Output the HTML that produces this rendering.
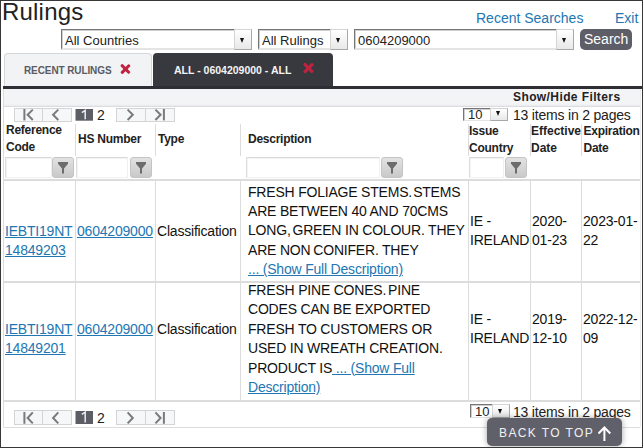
<!DOCTYPE html>
<html><head><meta charset="utf-8">
<style>
*{box-sizing:border-box}
html,body{margin:0;padding:0}
body{width:643px;height:448px;position:relative;overflow:hidden;background:#fff;font-family:"Liberation Sans",sans-serif;color:#222}
.a{position:absolute}
svg{position:absolute;overflow:visible}
.frame{position:absolute;left:0;top:0;width:643px;height:448px;border:1px solid #383838;z-index:50;pointer-events:none}
.title{left:2px;top:-2px;font-size:24px;letter-spacing:0.2px;color:#222;white-space:nowrap}
.lnk{color:#2277b3;font-size:14px;white-space:nowrap}
.sel{border-top:1px solid #767676;border-left:1px solid #767676;border-right:1px solid #e4e4e4;border-bottom:2px solid #e4e4e4;background:#fff;height:21px;box-shadow:inset 1px 1px 0 #cfcfcf}
.sel .t{position:absolute;left:3px;top:3px;font-size:13px;color:#222;white-space:nowrap}
.sel .b{position:absolute;right:-1px;top:-1px;bottom:-2px;width:18px;background:linear-gradient(#fff,#e8e8e8);border:1px solid #d4d4d4;border-right-color:#a8a8a8;border-bottom-color:#a8a8a8}
.tri{position:absolute;left:5px;top:8px;width:0;height:0;border-left:2.6px solid transparent;border-right:2.6px solid transparent;border-top:5px solid #111}
.btn{background:#5e5e68;color:#fff;border-radius:5px;font-size:14px}
.tab{border-radius:4px 4px 0 0;font-size:11px;font-weight:bold;white-space:nowrap}
.x{position:absolute;width:11px;height:11px}
.x:before,.x:after{content:"";position:absolute;left:4px;top:-0.6px;width:2.8px;height:12.2px;background:#be2340;border-radius:1px}
.x:before{transform:rotate(45deg)}
.x:after{transform:rotate(-45deg)}
.hd{font-size:12px;font-weight:bold;color:#222;line-height:16.6px;white-space:nowrap;letter-spacing:-0.25px}
.vl{width:1px;background:#dcdcdc}
.hl{height:2px;background:#dcdcdc}
.inp{border:1px solid #f0f0f0;border-top-color:#d9d9d9;border-left-color:#dedede;background:#fff;height:21px;box-shadow:inset 1px 1px 1px rgba(0,0,0,.05)}
.fb{border-radius:3px;background:linear-gradient(#e2e2e2,#c9c9c9);border:1px solid #c4c4c4;height:21px;width:22px}
.fb svg{left:0;top:0}
.cell{font-size:14px;line-height:19.1px;color:#111;white-space:nowrap;letter-spacing:-0.2px}
.u{color:#2277b3;text-decoration:underline}
.num{font-size:14px;color:#222;white-space:nowrap;letter-spacing:-0.1px}
</style></head><body>
<div class="frame"></div>

<div class="a title">Rulings</div>
<div class="a lnk" style="left:476px;top:10px">Recent Searches</div>
<div class="a lnk" style="left:615px;top:10px">Exit</div>

<!-- selects -->
<div class="a sel" style="left:61px;top:29px;width:191px"><span class="t">All Countries</span><div class="b"><div class="tri"></div></div></div>
<div class="a sel" style="left:258px;top:29px;width:90px"><span class="t">All Rulings</span><div class="b"><div class="tri"></div></div></div>
<div class="a sel" style="left:354px;top:29px;width:220px"><span class="t">0604209000</span><div class="b"><div class="tri"></div></div></div>
<div class="a btn" style="left:580px;top:29px;width:52px;height:21px"><span class="a" style="left:4px;top:2px">Search</span></div>

<!-- tabs -->
<div class="a tab" style="left:4px;top:53px;width:148px;height:34px;background:#f2f3f5;border:1px solid #d6d7da;border-bottom:none;color:#5a5b63">
  <span class="a" style="left:19px;top:11px;font-size:10px;letter-spacing:-0.1px">RECENT RULINGS</span>
  <div class="x" style="left:115px;top:9.5px"></div>
</div>
<div class="a tab" style="left:153px;top:53px;width:180px;height:34px;background:#38393e;color:#f4f4f4">
  <span class="a" style="left:21px;top:11px;font-size:10.5px">ALL - 0604209000 - ALL</span>
  <div class="x" style="left:149.5px;top:10px;transform:scale(1.05)"></div>
</div>
<div class="a" style="left:3px;top:86px;width:639px;height:3px;background:#2e2f34"></div>

<!-- grid container -->
<div class="a" style="left:3px;top:89px;width:638px;height:339px;border:1px solid #dcdcdc;border-right-color:#ececec;border-top:none;border-radius:0 0 2px 2px"></div>
<div class="a" style="left:4px;top:89px;width:636px;height:18px;background:linear-gradient(#f3f4f6 0,#f3f4f6 15px,#e9eaed 17px);border-bottom:1px solid #dcdce0"></div>
<div class="a hd" style="left:513px;top:89px;font-size:12px;letter-spacing:0.4px">Show/Hide Filters</div>

<!-- top pager -->
<svg width="643" height="448" viewBox="0 0 643 448" style="left:0;top:0">
  <g fill="#f6f7f9" stroke="#d4d4d6" stroke-width="1">
    <rect x="14.5" y="108.5" width="28" height="13"/>
    <rect x="42.5" y="108.5" width="29" height="13"/>
    <rect x="116.5" y="108.5" width="29" height="13"/>
    <rect x="145.5" y="108.5" width="29" height="13"/>
  </g>
  <rect x="75.5" y="109" width="17.5" height="11.7" fill="#5d5d66"/>
  <g fill="none" stroke="#7a7a7c" stroke-width="2">
    <line x1="24.4" y1="109" x2="24.4" y2="120.4"/>
    <polyline points="32.8,109.6 27.6,114.8 32.8,120"/>
    <polyline points="58.3,109.6 53.1,114.8 58.3,120"/>
    <polyline points="127.6,109.6 132.8,114.8 127.6,120"/>
    <polyline points="155.4,109.6 160.6,114.8 155.4,120"/>
    <line x1="163.9" y1="109" x2="163.9" y2="120.4"/>
  </g>
</svg>
<svg width="643" height="448" viewBox="0 0 643 448" style="left:0;top:0"><path d="M81.8 112.6L85.2 110.3V119.3" fill="none" stroke="#e6edf5" stroke-width="1.5"/></svg>
<div class="a num" style="left:97px;top:107px">2</div>

<div class="a sel" style="left:463px;top:108px;width:45px;height:13px;border-bottom-width:1px"><span class="t" style="left:4px;top:-2px">10</span><div class="b" style="width:18px;bottom:-1px"><div class="tri" style="top:2px"></div></div></div>
<div class="a num" style="left:513px;top:107px;letter-spacing:-0.2px">13 items in 2 pages</div>

<!-- header -->
<div class="a hd" style="left:6px;top:122px">Reference<br>Code</div>
<div class="a hd" style="left:78px;top:130.5px">HS Number</div>
<div class="a hd" style="left:158px;top:130.5px">Type</div>
<div class="a hd" style="left:248px;top:130.5px">Description</div>
<div class="a hd" style="left:469px;top:123px">Issue<br>Country</div>
<div class="a hd" style="left:531px;top:123px;letter-spacing:0">Effective<br>Date</div>
<div class="a hd" style="left:583.5px;top:123px">Expiration<br>Date</div>

<div class="a vl" style="left:75px;top:124px;height:32px"></div>
<div class="a vl" style="left:155px;top:124px;height:32px"></div>
<div class="a vl" style="left:240px;top:124px;height:32px"></div>
<div class="a vl" style="left:468px;top:124px;height:32px"></div>
<div class="a vl" style="left:530px;top:124px;height:32px"></div>
<div class="a vl" style="left:581px;top:124px;height:32px"></div>

<!-- filters -->
<div class="a inp" style="left:5px;top:157px;width:47px"></div><div class="a fb" style="left:52px;top:157px"><svg width="22" height="21"><path d="M5 4H15V5.8L11 10.6V15.6H9V10.6L5 5.8Z" fill="#6c6c6c"/></svg></div>
<div class="a inp" style="left:76px;top:157px;width:52px"></div><div class="a fb" style="left:130px;top:157px"><svg width="22" height="21"><path d="M5 4H15V5.8L11 10.6V15.6H9V10.6L5 5.8Z" fill="#6c6c6c"/></svg></div>
<div class="a inp" style="left:246px;top:157px;width:134px"></div><div class="a fb" style="left:381px;top:157px"><svg width="22" height="21"><path d="M5 4H15V5.8L11 10.6V15.6H9V10.6L5 5.8Z" fill="#6c6c6c"/></svg></div>
<div class="a inp" style="left:469px;top:157px;width:35px"></div><div class="a fb" style="left:505px;top:157px"><svg width="22" height="21"><path d="M5 4H15V5.8L11 10.6V15.6H9V10.6L5 5.8Z" fill="#6c6c6c"/></svg></div>

<div class="a hl" style="left:4px;top:179px;width:636px"></div>

<!-- rows -->
<div class="a vl" style="left:75px;top:181px;height:219px"></div>
<div class="a vl" style="left:155px;top:181px;height:219px"></div>
<div class="a vl" style="left:240px;top:181px;height:219px"></div>
<div class="a vl" style="left:468px;top:181px;height:219px"></div>
<div class="a vl" style="left:530px;top:181px;height:219px"></div>
<div class="a vl" style="left:581px;top:181px;height:219px"></div>
<div class="a hl" style="left:4px;top:281px;width:636px"></div>
<div class="a hl" style="left:4px;top:400px;width:636px"></div>

<div class="a cell" style="left:5px;top:222px"><span class="u">IEBTI19NT<br>14849203</span></div>
<div class="a cell" style="left:77px;top:222px"><span class="u">0604209000</span></div>
<div class="a cell" style="left:157px;top:222px">Classification</div>
<div class="a cell" style="left:248px;top:182.5px;line-height:19.4px">FRESH FOLIAGE STEMS.<span style="letter-spacing:-2.8px"> </span>STEMS<br>ARE BETWEEN 40 AND 70CMS<br>LONG,<span style="letter-spacing:-2px"> </span>GREEN IN COLOUR. THEY<br>ARE NON<span style="letter-spacing:-1px"> </span>CONIFER. THEY<br><span class="u">... (Show Full Description)</span></div>
<div class="a cell" style="left:470px;top:212px">IE -<br>IRELAND</div>
<div class="a cell" style="left:532px;top:212px">2020-<br>01-23</div>
<div class="a cell" style="left:583px;top:212px">2023-01-<br>22</div>

<div class="a cell" style="left:5px;top:320px"><span class="u">IEBTI19NT<br>14849201</span></div>
<div class="a cell" style="left:77px;top:320px"><span class="u">0604209000</span></div>
<div class="a cell" style="left:157px;top:320px">Classification</div>
<div class="a cell" style="left:248px;top:281px;line-height:19.4px">FRESH PINE CONES.<span style="letter-spacing:-2px"> </span>PINE<br>CODES CAN BE EXPORTED<br>FRESH TO CUSTOMERS OR<br>USED IN WREATH CREATION.<br>PRODUCT IS<span class="u"> ... (Show Full<br>Description)</span></div>
<div class="a cell" style="left:470px;top:309.5px">IE -<br>IRELAND</div>
<div class="a cell" style="left:532px;top:309.5px">2019-<br>12-10</div>
<div class="a cell" style="left:583px;top:309.5px">2022-12-<br>09</div>

<!-- bottom pager -->
<svg width="643" height="448" viewBox="0 0 643 448" style="left:0;top:0">
  <g fill="#f6f7f9" stroke="#d4d4d6" stroke-width="1">
    <rect x="14.5" y="410.5" width="28" height="14"/>
    <rect x="42.5" y="410.5" width="29" height="14"/>
    <rect x="116.5" y="410.5" width="29" height="14"/>
    <rect x="145.5" y="410.5" width="29" height="14"/>
  </g>
  <rect x="75.5" y="411" width="17.5" height="13" fill="#5d5d66"/>
  <g fill="none" stroke="#7a7a7c" stroke-width="2">
    <line x1="24.4" y1="412" x2="24.4" y2="423.8"/>
    <polyline points="32.8,412.4 27.6,418 32.8,423.4"/>
    <polyline points="58.3,412.4 53.1,418 58.3,423.4"/>
    <polyline points="127.6,412.4 132.8,418 127.6,423.4"/>
    <polyline points="155.4,412.4 160.6,418 155.4,423.4"/>
    <line x1="163.9" y1="412" x2="163.9" y2="423.8"/>
  </g>
</svg>
<svg width="643" height="448" viewBox="0 0 643 448" style="left:0;top:0"><path d="M81.8 414.4L85.2 412.1V422.6" fill="none" stroke="#e6edf5" stroke-width="1.5"/></svg>
<div class="a num" style="left:97px;top:410px">2</div>
<div class="a sel" style="left:470px;top:404px;width:40px;height:14px;border-bottom-width:1px"><span class="t" style="left:4px;top:-1px">10</span><div class="b" style="width:18px;bottom:-1px"><div class="tri" style="top:4px"></div></div></div>
<div class="a num" style="left:513px;top:404px;letter-spacing:-0.2px">13 items in 2 pages</div>

<!-- back to top -->
<div class="a" style="left:487px;top:418px;width:135px;height:28px;background:#60606b;border-radius:5px;box-shadow:0 0 6px rgba(0,0,0,.35);color:#f0f0f0;font-size:12px;letter-spacing:1.4px;z-index:10">
  <span class="a" style="left:12px;top:8px;white-space:nowrap">BACK TO TOP</span>
  <svg width="20" height="20" style="left:110px;top:8px"><path d="M1.5 7.5L7.4 1.5L13.3 7.5M7.4 2V15" fill="none" stroke="#fff" stroke-width="2"/></svg>
</div>
</body></html>
